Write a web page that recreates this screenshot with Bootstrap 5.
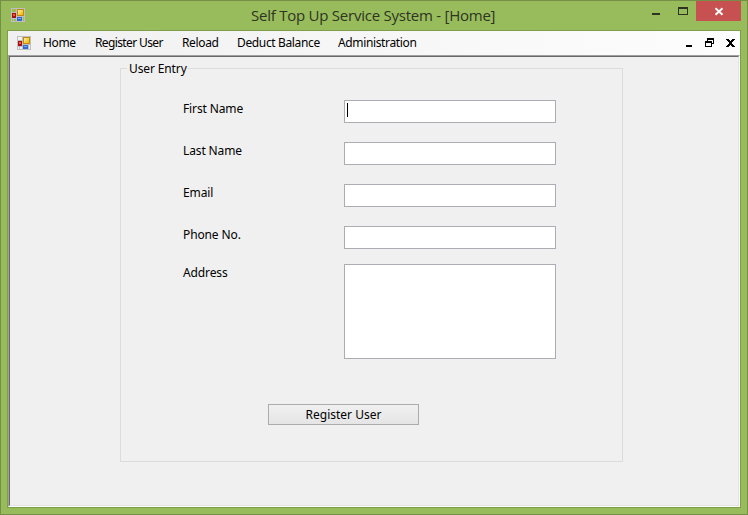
<!DOCTYPE html>
<html lang="en">
<head>
<meta charset="utf-8">
<meta name="viewport" content="width=device-width, initial-scale=1">
<title>Self Top Up Service System - [Home]</title>
<link href="https://cdn.jsdelivr.net/npm/bootstrap@5.3.0/dist/css/bootstrap.min.css" rel="stylesheet">
<style>
body{width:748px;height:515px;font-family:"Noto Sans","Open Sans",sans-serif;font-size:12px;color:#000;line-height:16px}
svg{display:block;flex:none}
.win{width:748px;height:515px;background:#98bc5b;border:1px solid #758f46;padding:0 6px 6px}
.titlebar{height:29px}
.title-icon{margin-top:7px;color:#98bc5b}
.win-title{font-family:"Open Sans",sans-serif;font-size:15px;line-height:28px;color:#2e3424;letter-spacing:-.24px;margin-left:226px;white-space:nowrap}
.win-close{width:45px;height:20px;background:#c75050}
.client{height:478px;border:1px solid #7f9e48}
.menubar{height:24px;background:linear-gradient(90deg,#f0f0f0,#fdfdfd);padding-left:9px}
.menubar a{color:#000;text-decoration:none;white-space:nowrap;letter-spacing:-.36px;line-height:24px}
.m1{width:52px;margin-left:12px}
.m2{width:87px}
.m3{width:55px}
.m4{width:101px}
.menubar .m2{letter-spacing:-.62px}
.mdi{border:1px solid;border-color:#a0a0a0 #fff #fff #a0a0a0}
.mdi-inner{border:1px solid;border-color:#696969 #e3e3e3 #e3e3e3 #696969;background:#f0f0f0;padding:11px 0 0 110px}
.group{width:503px;height:394px;border:1px solid #dcdcdc;padding:0 0 0 6px;letter-spacing:-.12px}
.group legend{font-size:12px;line-height:17px;width:61px;height:16px;margin:-9px 0 0;padding-left:2px;background:#f0f0f0;float:none;white-space:nowrap}
.fields{padding:24px 0 0 56px}
.line{height:42px}
.line label{width:161px;line-height:18px}
.line .form-control{width:212px;height:23px;min-height:0;padding:2px;border:1px solid #abadb3;border-radius:0;background:#fff;resize:none;font-size:12px;box-shadow:none}
.line textarea.form-control{height:95px}
.line.short{height:38px}
.line.tall{height:140px}
.caret{width:1px;height:14px;background:#000;left:3px;top:3px}
.btn-reg{width:151px;height:21px;margin:0 0 0 141px;padding:1px 0 0;border:1px solid #acacac;border-radius:0;background:linear-gradient(#f0f0f0,#e5e5e5);font-size:12px;line-height:18px;color:#000}
</style>
</head>
<body>
<svg width="0" height="0" class="position-absolute" aria-hidden="true"><defs>
<linearGradient id="y" x2="1" y2="1"><stop stop-color="#fff0a0"/><stop offset="1" stop-color="#f2b000"/></linearGradient>
<symbol id="app" viewBox="0 0 14 14" shape-rendering="crispEdges">
<path fill="#bfbfbf" d="M0 0h14v14H0z"/><path fill="currentColor" d="M1 1h4v3H1zM1 11h1v2H1zM3 11h2v2H3zM12 9h1v4h-1z"/>
<path fill="#c08a10" d="M6 1h7v7H6z"/><path fill="url(#y)" d="M7 2h5v5H7z"/>
<path fill="#a51212" d="M1 5h4v5H1z"/><path fill="#e8584a" d="M2 6h2v2H2z"/>
<path fill="#3469cf" d="M6 9h5v4H6z"/><path fill="#79a9f5" d="M7 10h3v1H7z"/></symbol></defs></svg>
<div class="win">
 <header class="titlebar d-flex align-items-start">
  <svg width="14" height="14" class="ms-1 title-icon"><use href="#app"/></svg>
  <div class="win-title">Self Top Up Service System - [Home]</div>
  <div class="d-flex ms-auto">
   <svg width="44" height="20" shape-rendering="crispEdges"><path d="M0 12h8v2H0z" fill="#2d3322"/><path d="M26 6h10v8H26zM27 8v5h8V8z" fill-rule="evenodd" fill="#2d3322"/></svg>
   <div class="win-close"><svg width="45" height="20" stroke="#fff" stroke-width="1.9"><path d="M19.5 7.3l7 6.4M26.5 7.3l-7 6.4"/></svg></div>
  </div>
 </header>
 <main class="client d-flex flex-column">
  <nav class="menubar d-flex align-items-center">
   <svg width="14" height="14" style="color:#f2f2f2"><use href="#app"/></svg>
   <a class="m1" href="#">Home</a><a class="m2" href="#">Register User</a><a class="m3" href="#">Reload</a><a class="m4" href="#">Deduct Balance</a><a class="m5" href="#">Administration</a>
   <svg class="ms-auto" width="54" height="24" shape-rendering="crispEdges"><path d="M0 14h6v2H0z"/><path fill-rule="evenodd" d="M21 7h7v6h-2v3h-7v-6h2zM22 9v1h4v2h1V9zM20 12v3h5v-3z"/><path d="M40 8h3v1h1v1h1V9h1V8h3v1h-1v1h-1v1h-1v2h1v1h1v1h1v1h-3v-1h-1v-1h-1v1h-1v1h-3v-1h1v-1h1v-1h1v-2h-1v-1h-1V9h-1z"/></svg>
  </nav>
  <section class="mdi flex-fill d-flex">
   <div class="mdi-inner flex-fill">
    <form class="group">
     <legend>User Entry</legend>
     <div class="fields">
      <div class="line d-flex"><label for="f">First Name</label><div class="position-relative"><input id="f" class="form-control"><span class="caret position-absolute"></span></div></div>
      <div class="line d-flex"><label for="l">Last Name</label><input id="l" class="form-control"></div>
      <div class="line d-flex"><label for="e">Email</label><input id="e" class="form-control"></div>
      <div class="line short d-flex"><label for="p">Phone No.</label><input id="p" class="form-control"></div>
      <div class="line tall d-flex"><label for="a">Address</label><textarea id="a" class="form-control"></textarea></div>
     </div>
     <button type="button" class="btn btn-reg">Register User</button>
    </form>
   </div>
  </section>
 </main>
</div>
<script src="https://cdn.jsdelivr.net/npm/bootstrap@5.3.0/dist/js/bootstrap.bundle.min.js"></script>
</body>
</html>
